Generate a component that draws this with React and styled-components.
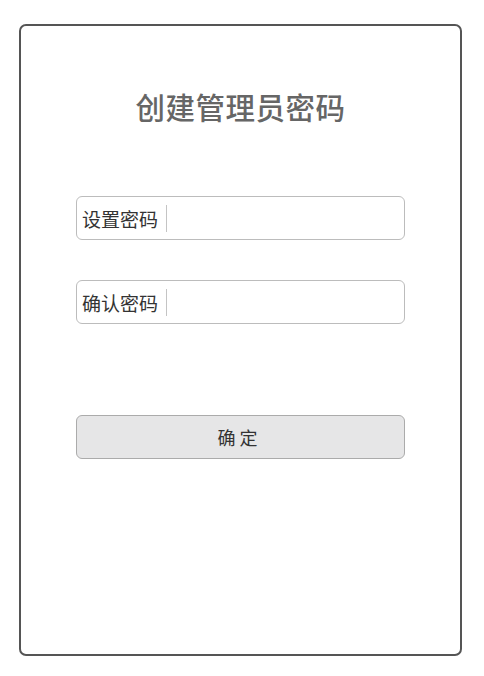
import React from "react";
import styled, { createGlobalStyle } from "styled-components";

const GlobalStyle = createGlobalStyle`
  html, body {
    margin: 0;
    padding: 0;
    background: #ffffff;
    font-family: "Noto Sans CJK SC", "Noto Sans", sans-serif;
  }
`;

const Page = styled.div`
  padding: 24px 22px 20px 19px;
`;

const Card = styled.div`
  box-sizing: border-box;
  width: 443px;
  height: 632px;
  border: 2px solid #555555;
  border-radius: 7px;
  padding: 62px 55px 0 55px;
  display: flex;
  flex-direction: column;
`;

const Title = styled.h1`
  margin: 0 0 72px 0;
  height: 36px;
  line-height: 36px;
  font-size: 29.5px;
  font-weight: 500;
  color: #666666;
  text-align: center;
  letter-spacing: 0.5px;
`;

const Field = styled.label`
  box-sizing: border-box;
  display: flex;
  align-items: center;
  width: 329px;
  height: 44px;
  margin-bottom: ${({ $gap }) => $gap}px;
  border: 1.5px solid #bcbcbc;
  border-radius: 6px;
  padding-left: 5px;
`;

const Label = styled.span`
  font-size: 19px;
  color: #333333;
  padding-right: 8px;
  border-right: 1.5px solid #c4c4c4;
  line-height: 27px;
`;

const Input = styled.input`
  flex: 1;
  border: none;
  outline: none;
  background: transparent;
  font-size: 16px;
  padding: 0 8px;
`;

const Button = styled.button`
  box-sizing: border-box;
  width: 329px;
  height: 44px;
  background: #e6e6e7;
  border: 1.5px solid #ababab;
  border-radius: 6px;
  font-family: inherit;
  font-size: 18px;
  color: #333333;
  letter-spacing: 4px;
  padding-left: 4px;
`;

export default function App() {
  return (
    <>
      <GlobalStyle />
      <Page>
        <Card>
          <Title>创建管理员密码</Title>
          <Field $gap={40}>
            <Label>设置密码</Label>
            <Input type="password" />
          </Field>
          <Field $gap={91}>
            <Label>确认密码</Label>
            <Input type="password" />
          </Field>
          <Button>确定</Button>
        </Card>
      </Page>
    </>
  );
}
